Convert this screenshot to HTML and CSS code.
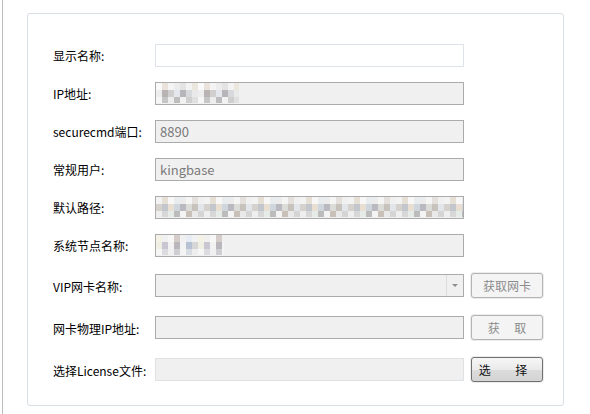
FILE: index.html
```html
<!DOCTYPE html>
<html lang="zh">
<head>
<meta charset="utf-8">
<link rel="stylesheet" href="styles.css">
</head>
<body>
<div class="page">
  <div class="card">
    <div class="row">
      <label class="lbl">显示名称:</label>
      <div class="field field-light"></div>
    </div>
    <div class="row">
      <label class="lbl">IP地址:</label>
      <div class="field field-dis"><span class="mosaic mosaic-ip"></span></div>
    </div>
    <div class="row">
      <label class="lbl">securecmd端口:</label>
      <div class="field field-dis"><span class="val">8890</span></div>
    </div>
    <div class="row">
      <label class="lbl">常规用户:</label>
      <div class="field field-dis"><span class="val">kingbase</span></div>
    </div>
    <div class="row">
      <label class="lbl">默认路径:</label>
      <div class="field field-dis"><span class="mosaic mosaic-path"></span></div>
    </div>
    <div class="row">
      <label class="lbl">系统节点名称:</label>
      <div class="field field-dis"><span class="mosaic mosaic-node"></span></div>
    </div>
    <div class="row row-btn">
      <label class="lbl">VIP网卡名称:</label>
      <div class="field field-dis select">
        <span class="arrow-box"><span class="arrow"></span></span>
      </div>
      <button class="btn btn-dis">获取网卡</button>
    </div>
    <div class="row row-btn">
      <label class="lbl">网卡物理IP地址:</label>
      <div class="field field-dis"></div>
      <button class="btn btn-dis btn-spaced">获 取</button>
    </div>
    <div class="row row-btn">
      <label class="lbl">选择License文件:</label>
      <div class="field field-lic"></div>
      <button class="btn btn-on btn-wide">选 择</button>
    </div>
  </div>
</div>
</body>
</html>
```

FILE: styles.css
```css
html, body {
  margin: 0;
  padding: 0;
  background: #ffffff;
}
body {
  font-family: "Noto Sans CJK SC", "Noto Sans", sans-serif;
  font-size: 12px;
  color: #000000;
}
.page {
  width: 590px;
  height: 414px;
  box-sizing: border-box;
  border-left: 1px solid #bdbdbd;
  margin-left: 2px;
  padding-top: 13px;
  padding-left: 24px;
}
.card {
  width: 537px;
  height: 393px;
  box-sizing: border-box;
  border: 1px solid #d7dee4;
  border-radius: 3px;
  padding: 30px 0 0 25px;
  display: flex;
  flex-direction: column;
}
.row {
  display: flex;
  align-items: center;
  height: 23px;
  margin-bottom: 15px;
}
.row-btn {
  height: 26px;
  margin-top: 1px;
}
.lbl {
  width: 102px;
  flex: none;
  line-height: 23px;
  white-space: nowrap;
}
.field {
  width: 309px;
  height: 23px;
  box-sizing: border-box;
  flex: none;
  position: relative;
  display: flex;
  align-items: center;
  padding-left: 4px;
  overflow: hidden;
}
.row-btn .field {
  align-self: flex-start;
  margin-top: 1px;
}
.field-light {
  border: 1px solid #dde3e9;
  background: #ffffff;
}
.field-dis {
  border: 1px solid #ababab;
  background: #f0f0f0;
}
.field-lic {
  border: 1px solid #dfe2e5;
  background: #f0f0f0;
}
.val {
  color: #7b7b7b;
  font-size: 13px;
  line-height: 21px;
}
.mosaic {
  position: absolute;
  left: 0;
  top: 0;
  height: 20px;
  background-repeat: no-repeat;
  background-size: 100% 7px, 100% 7px, 100% 6px;
  background-position: 0 0, 0 7px, 0 14px;
}
.mosaic-ip {
  width: 83px;
  background-image:
    repeating-linear-gradient(90deg, #fafafa 0 6px, #e9e3dc 6px 12px, #f4f4f4 12px 18px, #ececec 18px 24px, #e3e3e3 24px 30px, #f3f3f3 30px 36px, #ebe6de 36px 42px),
    repeating-linear-gradient(90deg, #ededed 0 6px, #b9b4b4 6px 12px, #d1ced0 12px 18px, #e4e8ee 18px 24px, #b8b5b8 24px 30px, #d7d9dd 30px 36px, #e9e9e9 36px 42px),
    repeating-linear-gradient(90deg, #f6f6f6 0 6px, #c6c6c6 6px 12px, #ededed 12px 18px, #bdbdbd 18px 24px, #f2f2f2 24px 30px, #cfcfcf 30px 36px, #e0e0e0 36px 42px);
}
.mosaic-path {
  width: 307px;
  background-image:
    repeating-linear-gradient(90deg, #f3f3f3 0 6px, #e6dfd6 6px 12px, #f7f7f7 12px 18px, #e9ecef 18px 24px, #ececec 24px 30px, #f5f5f5 30px 36px, #e4e1dc 36px 42px, #f0f0f0 42px 48px),
    repeating-linear-gradient(90deg, #d5d2ce 0 6px, #c3c6cc 6px 12px, #e8ded2 12px 18px, #cfd6de 18px 24px, #b9b9bf 24px 30px, #dbdbd8 30px 36px, #c8c2bc 36px 42px, #e2e6ea 42px 48px),
    repeating-linear-gradient(90deg, #eeeeee 0 6px, #d7d7d7 6px 12px, #e5ebe6 12px 18px, #bcbcbc 18px 24px, #f4f4f4 24px 30px, #c9c0b8 30px 36px, #e9e9e9 36px 42px, #d5d5d5 42px 48px);
}
.mosaic-node {
  width: 68px;
  background-image:
    repeating-linear-gradient(90deg, #f4f2e6 0 6px, #f0f0f0 6px 12px, #f7f7f7 12px 18px, #d3ccc8 18px 24px, #f0f0f0 24px 30px, #e6ecf2 30px 36px, #f2f2f2 36px 42px),
    repeating-linear-gradient(90deg, #efefe4 0 6px, #c9c6d2 6px 12px, #f2f2f2 12px 18px, #b9b7bc 18px 24px, #f3f3f3 24px 30px, #b6c2d2 30px 36px, #d6d6d6 36px 42px),
    repeating-linear-gradient(90deg, #f6f6f6 0 6px, #dcdce0 6px 12px, #f0f0f0 12px 18px, #cfcfd3 18px 24px, #f4f4f4 24px 30px, #d8dde4 30px 36px, #eeeeee 36px 42px);
}
.select .arrow-box {
  position: absolute;
  right: 0;
  top: 0;
  bottom: 0;
  width: 16px;
  border-left: 1px solid #dcdcdc;
  display: flex;
  align-items: center;
  justify-content: center;
}
.arrow {
  width: 0;
  height: 0;
  border-left: 3px solid transparent;
  border-right: 3px solid transparent;
  border-top: 3px solid #8e8e8e;
}
.btn {
  margin-left: 7px;
  width: 72px;
  height: 25px;
  box-sizing: border-box;
  border-radius: 3px;
  font-family: "Noto Sans CJK SC", "Noto Sans", sans-serif;
  font-size: 12px;
  padding: 0;
  box-shadow: 0 0 0 1px #ececec;
  flex: none;
  align-self: flex-start;
}
.btn-dis {
  border: 1px solid #b3b3b3;
  background: #f4f4f4;
  color: #8c8c8c;
}
.btn-on {
  border: 1px solid #707070;
  background: linear-gradient(#f6f6f6, #eaeaea 50%, #dcdcdc 51%, #d4d4d4);
  color: #111111;
}
.btn-spaced {
  word-spacing: 12px;
}
.btn-wide {
  word-spacing: 22px;
  padding-right: 8px;
}
```
